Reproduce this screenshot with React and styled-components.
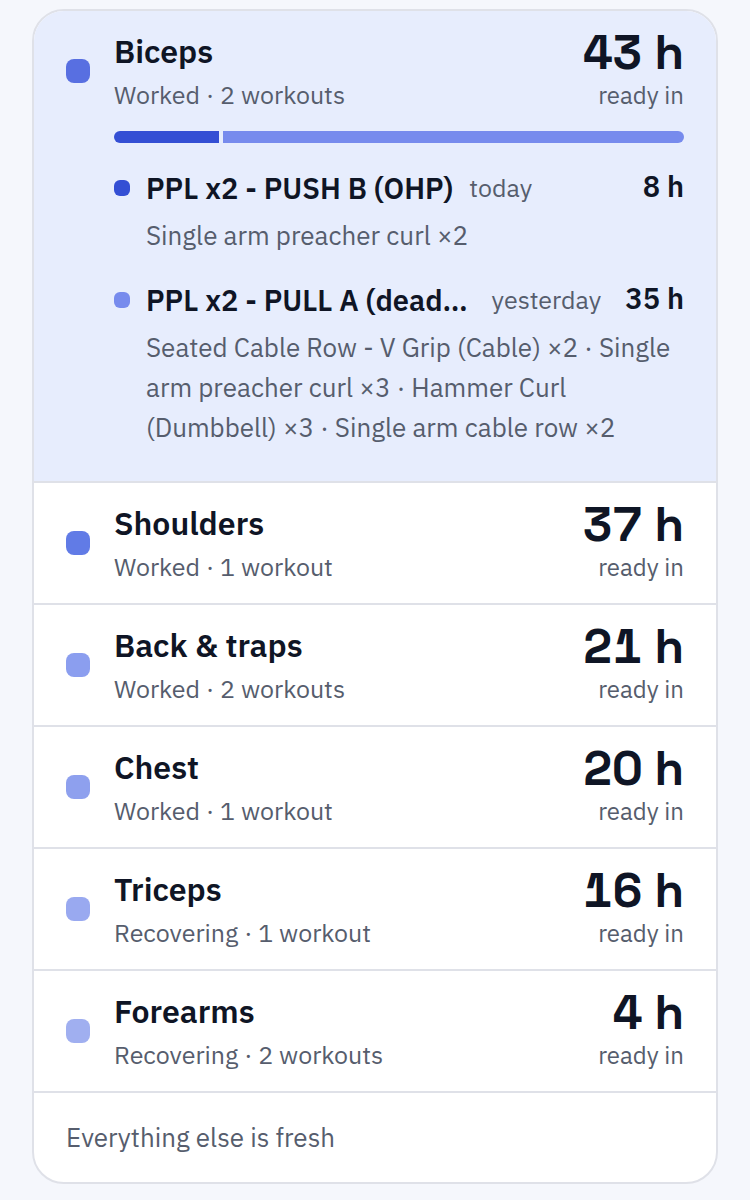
import React, { useState } from 'react';
import styled, { createGlobalStyle } from 'styled-components';

const GlobalStyle = createGlobalStyle`
    * {
        box-sizing: border-box;
    }

    body {
        margin: 0;
        background: #f5f7fc;
        color: #0f1525;
        font-family: 'IBM Plex Sans', Roboto, 'Liberation Sans', sans-serif;
    }
`;

const Page = styled.main`
    padding: 9px 32px 16px;
`;

const Card = styled.section`
    background: white;
    border: 2px solid #dfe1e8;
    border-radius: 32px;
    overflow: hidden;
`;

const Group = styled.div`
    background: ${(props) => (props.$open ? '#e7edfd' : 'white')};
    border-bottom: 2px solid #dfe1e8;
`;

const Head = styled.button`
    display: flex;
    align-items: center;
    gap: 24px;
    width: 100%;
    padding: 16px 32px;
    border: none;
    background: transparent;
    color: inherit;
    font-family: inherit;
    text-align: left;
    cursor: pointer;
`;

const Swatch = styled.span`
    flex: none;
    width: ${(props) => (props.$small ? 16 : 24)}px;
    height: ${(props) => (props.$small ? 16 : 24)}px;
    border-radius: ${(props) => (props.$small ? 6 : 8)}px;
    background: ${(props) => props.$color};
`;

const Labels = styled.span`
    display: flex;
    flex-direction: column;
    flex: 1;
    min-width: 0;
`;

const Name = styled.span`
    font-size: 32px;
    font-weight: 600;
    line-height: 48px;
`;

const Status = styled.span`
    color: #565d6d;
    font-size: 25px;
    line-height: 40px;
`;

const Ready = styled.span`
    display: flex;
    flex-direction: column;
    align-items: flex-end;
`;

const Hours = styled.span`
    font-family: 'Space Grotesk', Inter, sans-serif;
    font-size: 48px;
    font-weight: 600;
    font-variant-numeric: tabular-nums;
    line-height: 48px;
`;

const ReadyLabel = styled.span`
    color: #565d6d;
    font-size: 24px;
    line-height: 36px;
`;

const Details = styled.div`
    padding: 0 32px 34px 80px;
`;

const Bar = styled.div`
    display: flex;
    gap: 4px;
    height: 12px;
    border-radius: 6px;
    overflow: hidden;
`;

const Segment = styled.span`
    flex: ${(props) => props.$hours} 0 0;
    background: ${(props) => props.$color};
`;

const Workouts = styled.ul`
    display: flex;
    flex-direction: column;
    gap: 25px;
    margin: 0;
    padding: 25px 0 0;
    list-style: none;
`;

const WorkoutLine = styled.div`
    display: flex;
    align-items: center;
    gap: 16px;
    line-height: 40px;
`;

const WorkoutName = styled.span`
    min-width: 0;
    overflow: hidden;
    white-space: nowrap;
    text-overflow: ellipsis;
    font-size: 29px;
    font-weight: 600;
`;

const When = styled.span`
    color: #565d6d;
    font-size: 25px;
`;

const WorkoutHours = styled.span`
    flex: none;
    margin-left: auto;
    padding: 0 0 4px 8px;
    font-size: 29px;
    font-weight: 600;
    line-height: 36px;
`;

const Exercises = styled.p`
    margin: 0;
    padding: 7px 0 0 32px;
    color: #565d6d;
    font-size: 26px;
    line-height: 40px;
`;

const Footer = styled.p`
    margin: 0;
    padding: 24px 32px 25px;
    color: #565d6d;
    font-size: 26px;
    line-height: 40px;
`;

const muscles = [
    {
        name: 'Biceps',
        status: 'Worked · 2 workouts',
        hours: 43,
        color: '#586fe1',
        workouts: [
            {
                name: 'PPL x2 - PUSH B (OHP)',
                when: 'today',
                hours: 8,
                color: '#344fd4',
                exercises: 'Single arm preacher curl ×2',
            },
            {
                name: 'PPL x2 - PULL A (deadlift)',
                when: 'yesterday',
                hours: 35,
                color: '#778bed',
                exercises:
                    'Seated Cable Row - V Grip (Cable) ×2 · Single arm preacher curl ×3 · Hammer Curl (Dumbbell) ×3 · Single arm cable row ×2',
            },
        ],
    },
    { name: 'Shoulders', status: 'Worked · 1 workout', hours: 37, color: '#617be6' },
    { name: 'Back & traps', status: 'Worked · 2 workouts', hours: 21, color: '#8b9eef' },
    { name: 'Chest', status: 'Worked · 1 workout', hours: 20, color: '#8ea0ee' },
    { name: 'Triceps', status: 'Recovering · 1 workout', hours: 16, color: '#99a9f0' },
    { name: 'Forearms', status: 'Recovering · 2 workouts', hours: 4, color: '#a0aff0' },
];

const Breakdown = ({ workouts }) => (
    <Details>
        <Bar>
            {workouts.map((w) => (
                <Segment key={w.name} $hours={w.hours} $color={w.color} />
            ))}
        </Bar>
        <Workouts>
            {workouts.map((w) => (
                <li key={w.name}>
                    <WorkoutLine>
                        <Swatch $small $color={w.color} />
                        <WorkoutName>{w.name}</WorkoutName>
                        <When>{w.when}</When>
                        <WorkoutHours>{w.hours} h</WorkoutHours>
                    </WorkoutLine>
                    <Exercises>{w.exercises}</Exercises>
                </li>
            ))}
        </Workouts>
    </Details>
);

const App = () => {
    const [selected, setSelected] = useState('Biceps');

    return (
        <Page>
            <GlobalStyle />
            <Card>
                {muscles.map((m) => {
                    const open = selected === m.name;
                    return (
                        <Group key={m.name} $open={open}>
                            <Head aria-expanded={open} onClick={() => setSelected(open ? null : m.name)}>
                                <Swatch $color={m.color} />
                                <Labels>
                                    <Name>{m.name}</Name>
                                    <Status>{m.status}</Status>
                                </Labels>
                                <Ready>
                                    <Hours>{m.hours} h</Hours>
                                    <ReadyLabel>ready in</ReadyLabel>
                                </Ready>
                            </Head>
                            {open && m.workouts && <Breakdown workouts={m.workouts} />}
                        </Group>
                    );
                })}
                <Footer>Everything else is fresh</Footer>
            </Card>
        </Page>
    );
};

export default App;
